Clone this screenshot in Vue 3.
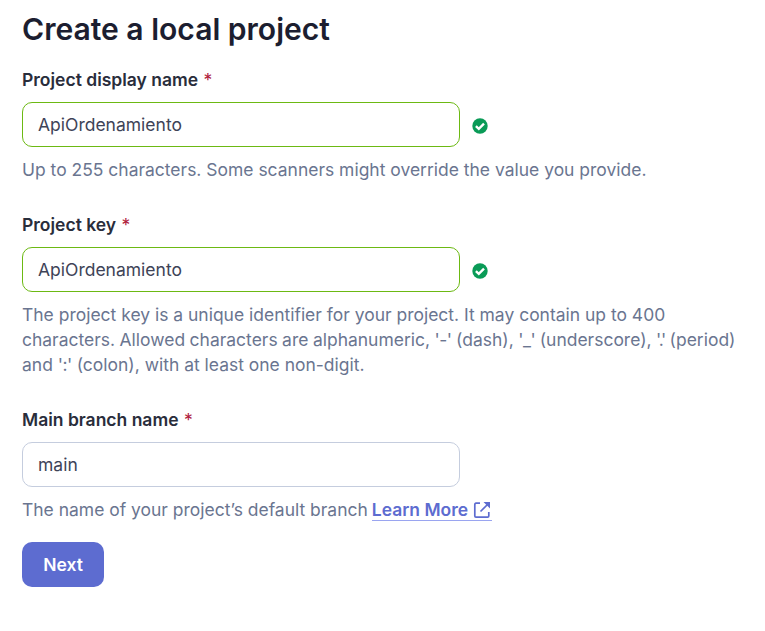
<script setup>
const fields = [
  { id: 'name', label: 'Project display name', value: 'ApiOrdenamiento', valid: true, help: [['Up to 255 characters. Some scanners might override the value you provide.']] },
  { id: 'key', label: 'Project key', value: 'ApiOrdenamiento', valid: true, help: [
    ['The project key is a unique identifier for your project. It may contain up to 400'],
    ['characters. Allowed characters are alphanumeric, ', "'-'", ' (dash), ', "'_'", ' (underscore), ', "'.'", ' (period)'],
    ['and ', "':'", ' (colon), with at least one non-digit.'],
  ] },
  { id: 'branch', label: 'Main branch name', value: 'main', valid: false, help: [['The name of your project’s default branch']], link: true },
]
</script>

<template>
  <main class="page">
    <h1>Create a local project</h1>
    <form @submit.prevent>
      <div v-for="f in fields" :key="f.id" class="field">
        <label :for="f.id">{{ f.label }} <span class="req">*</span></label>
        <div class="row">
          <input :id="f.id" type="text" :value="f.value" :class="{ valid: f.valid }" />
          <svg v-if="f.valid" class="check" viewBox="0 0 16 16">
            <circle cx="8" cy="8" r="7.7" fill="#0a9b57" />
            <path d="M3.9 8.1 6.8 10.8 12 5.7" fill="none" stroke="#fff" stroke-width="2.4" />
          </svg>
        </div>
        <div class="help">
          <div v-for="(line, i) in f.help" :key="i" class="line" :class="{ tight: line.length > 3 }"><span v-for="(part, j) in line" :key="j" :class="{ quoted: j % 2 === 1, dot: part === `'.'` }">{{ part }}</span>
            <a v-if="f.link" href="#">Learn More<svg viewBox="0 0 18 18"><path d="M7 2.2H3Q1.8 2.2 1.8 3.4V15Q1.8 16.2 3 16.2H14.6Q15.8 16.2 15.8 15V11M15 3 7.5 10.5" fill="none" stroke="currentColor" stroke-width="1.7" /><path d="M10.5 1H17V7.5Z" fill="currentColor" /></svg></a>
          </div>
        </div>
      </div>
      <button type="submit">Next</button>
    </form>
  </main>
</template>

<style>
body { margin: 0; background: #fff; }
</style>
<style scoped>
.page { box-sizing: border-box; height: 631px; padding: 9px 22px 0; font-family: Inter, "Liberation Sans", sans-serif; font-size: 17.5px; line-height: 25px; color: #3e4357; overflow: hidden; }
h1 { margin: 0 0 18px; font-size: 30.05px; line-height: 40px; font-weight: 600; color: #1c1e30; white-space: nowrap; }
.field { margin-bottom: 30px; }
.field:last-of-type { margin-bottom: 20px; }
label { display: block; font-weight: 600; color: #292d3b; margin-bottom: 10px; white-space: nowrap; }
.req { margin-left: 1px; font-weight: 400; color: #b0203c; }
.row { display: flex; align-items: center; gap: 12px; height: 45px; }
input { box-sizing: border-box; width: 438px; height: 45px; padding: 0 15px; border: 1px solid #c5cdde; border-radius: 10px; font: inherit; color: #3e4357; background: #fff; outline: none; }
input.valid { border-color: #6cb913; }
.check { width: 16px; height: 16px; margin-top: 3px; }
.help { margin-top: 10px; font-size: 17.48px; color: #6a7590; }
.line { white-space: nowrap; }
.tight { word-spacing: -0.4px; }
.quoted { letter-spacing: -0.5px; }
.dot { letter-spacing: -1.2px; }
a { display: inline-flex; align-items: center; height: 21px; margin-left: 4px; font-weight: 600; color: #5d6cd0; text-decoration: none; border-bottom: 1px solid #9aa5f0; }
a svg { width: 18px; height: 18px; margin-left: 5px; margin-right: 1px; }
button { display: block; width: 82px; height: 45px; padding: 0; border: 0; border-radius: 10px; background: #5d6cd0; color: #fff; font: inherit; font-weight: 600; }
</style>
